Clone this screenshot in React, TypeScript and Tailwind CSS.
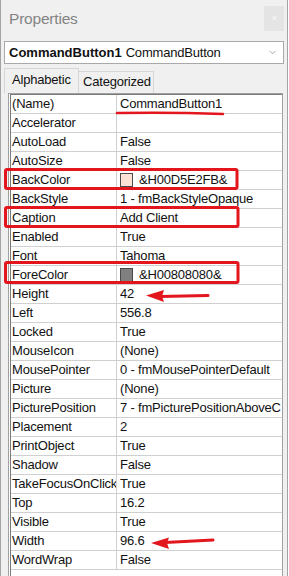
import { ChevronDown } from "lucide-react"

type Prop = {
  name: string
  value: string
  swatch?: string
}

const props: Prop[] = [
  { name: "(Name)", value: "CommandButton1" },
  { name: "Accelerator", value: "" },
  { name: "AutoLoad", value: "False" },
  { name: "AutoSize", value: "False" },
  { name: "BackColor", value: "&H00D5E2FB&", swatch: "bg-[#fbe2d5]" },
  { name: "BackStyle", value: "1 - fmBackStyleOpaque" },
  { name: "Caption", value: "Add Client" },
  { name: "Enabled", value: "True" },
  { name: "Font", value: "Tahoma" },
  { name: "ForeColor", value: "&H00808080&", swatch: "bg-[#808080]" },
  { name: "Height", value: "42" },
  { name: "Left", value: "556.8" },
  { name: "Locked", value: "True" },
  { name: "MouseIcon", value: "(None)" },
  { name: "MousePointer", value: "0 - fmMousePointerDefault" },
  { name: "Picture", value: "(None)" },
  { name: "PicturePosition", value: "7 - fmPicturePositionAboveC" },
  { name: "Placement", value: "2" },
  { name: "PrintObject", value: "True" },
  { name: "Shadow", value: "False" },
  { name: "TakeFocusOnClick", value: "True" },
  { name: "Top", value: "16.2" },
  { name: "Visible", value: "True" },
  { name: "Width", value: "96.6" },
  { name: "WordWrap", value: "False" },
]

// red marks drawn over the screenshot
const Annotations = () => (
  <svg
    className="pointer-events-none absolute left-0 top-0"
    width={289}
    height={576}
    viewBox="0 0 289 576"
  >
    <g stroke="#e3161e" fill="none" strokeLinecap="round" strokeLinejoin="round">
      <path d="M117 113 Q170 112 223 114" strokeWidth={2.5} />
      <rect x={5.5} y={169.5} width={231.5} height={19} rx={1.5} strokeWidth={3} />
      <rect x={5.5} y={207.5} width={232.5} height={19} rx={1.5} strokeWidth={3} />
      <rect x={5.5} y={262.5} width={232.5} height={20} rx={1.5} strokeWidth={3} />
      <path d="M208 295.5 L160 296.5" strokeWidth={3} />
      <path d="M213 540 L165 542.5" strokeWidth={3} />
    </g>
    <g fill="#e3161e">
      <polygon points="146,295.5 164,290 162,296.2 164,302" />
      <polygon points="151,543 169,537.5 167,543 169,549" />
    </g>
  </svg>
)

export default function App() {
  return (
    <div className="relative h-[576px] w-[289px] overflow-hidden bg-white font-['Liberation_Sans',Arial,sans-serif] text-[13px] tracking-[-0.2px] text-[#111]">
      <div className="flex h-full w-[288px] flex-col border-x border-[#a3a3a3] bg-[#f0f0f0]">
        {/* title */}
        <div className="flex h-[38px] shrink-0 items-start justify-between">
          <span className="pl-[8px] pt-[7px] text-[15.5px] tracking-[-0.2px] text-[#848484]">
            Properties
          </span>
          <div className="mr-[3px] mt-[6px] flex h-[25px] w-[20px] items-center justify-center bg-[#e4e4e4] text-[11px] text-[#f7f7f7]">
            ×
          </div>
        </div>

        {/* object selector */}
        <div className="mx-[3px] mt-[3px] flex h-[23px] shrink-0 items-center border border-[#a9a9a9] bg-white pl-[4px] pr-[5px]">
          <span className="font-bold tracking-[0px]">CommandButton1</span>
          <span className="ml-[4px]">CommandButton</span>
          <ChevronDown className="ml-auto size-[11px] text-[#6f6f6f]" strokeWidth={1.3} />
        </div>

        {/* tabs */}
        <div className="mt-[4px] flex h-[25px] shrink-0 items-end pl-[3px]">
          <div className="flex h-[25px] w-[75px] items-center border-x border-t border-[#d6d6d6] bg-[#f0f0f0] pl-[7px] pb-[2px]">
            Alphabetic
          </div>
          <div className="flex h-[22px] w-[75px] items-center border-r border-t border-[#d6d6d6] bg-[#f0f0f0] pl-[4px] pb-[1px]">
            Categorized
          </div>
        </div>

        {/* property grid */}
        <div className="ml-[7px] flex w-[275px] flex-1 flex-col border-x border-t border-[#a0a0a0] bg-white pl-[1px]">
          <div className="flex flex-1 flex-col border-l border-t border-[#7a7a7a]">
            {props.map((p) => (
              <div
                key={p.name}
                className="flex h-[19px] shrink-0 items-center border-b border-[#d0d0d0]"
              >
                <div className="flex h-full w-[106px] shrink-0 items-center overflow-hidden whitespace-nowrap border-r border-[#d0d0d0] pl-[1px]">
                  {p.name}
                </div>
                <div className="flex h-full min-w-0 flex-1 items-center overflow-hidden whitespace-nowrap pl-[3px]">
                  {p.swatch && (
                    <span
                      className={`mr-[6px] h-[14px] w-[13px] shrink-0 border border-[#4a4a4a] ${p.swatch}`}
                    />
                  )}
                  {p.value}
                </div>
              </div>
            ))}
          </div>
        </div>
      </div>
      <Annotations />
    </div>
  )
}
